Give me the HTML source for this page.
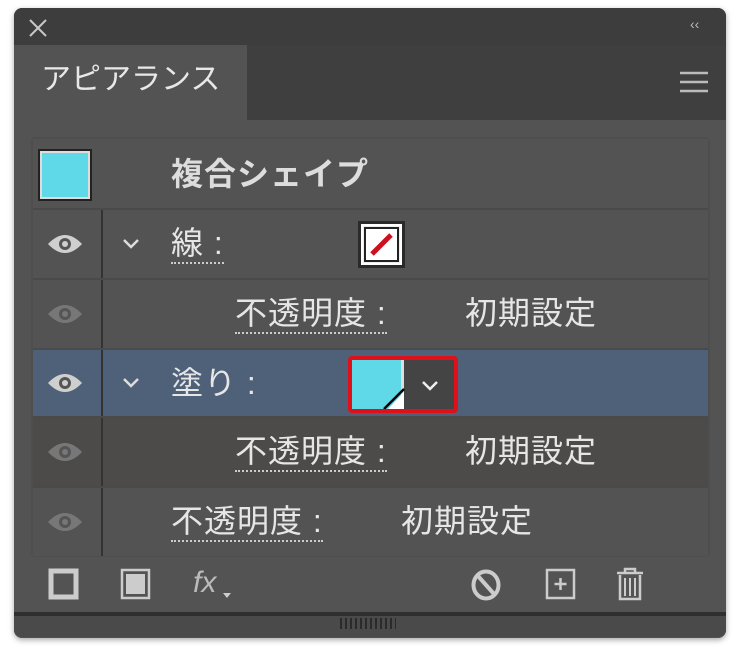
<!DOCTYPE html>
<html><head><meta charset="utf-8"><style>
*{margin:0;padding:0;box-sizing:border-box}
body{width:740px;height:660px;background:#fff;position:relative;overflow:hidden;font-family:"Liberation Sans","Noto Sans CJK JP",sans-serif;color:#e6e6e6}
.a{position:absolute}
.row{position:absolute;left:33px;width:675px;background:#535353;border-bottom:2px solid #4a4a4a}
.sep{position:absolute;left:68px;top:0;bottom:0;width:2px;background:#333}
.t{position:absolute;font-size:32px;letter-spacing:1px;line-height:1;white-space:nowrap}
.u{border-bottom:2px dotted #ccc;padding-bottom:3px}
.eye{position:absolute;left:14px}
</style></head><body>
<div class="a" style="left:14px;top:8px;width:712px;height:630px;background:#4c4c4c;border-radius:8px;overflow:hidden;box-shadow:0 2px 6px rgba(0,0,0,.35)">
 <div class="a" style="left:0;top:0;width:712px;height:37px;background:#3d3d3d"></div>
 <svg class="a" style="left:14px;top:10px" width="20" height="20"><path d="M2 2L18 18M18 2L2 18" stroke="#c8c8c8" stroke-width="2"/></svg>
 <div class="a" style="left:676px;top:8px;font-size:14px;color:#bbb">‹‹</div>
 <div class="a" style="left:0;top:37px;width:712px;height:75px;background:#3f3f3f"></div>
 <div class="a" style="left:0;top:37px;width:233px;height:83px;background:#535353"></div>
 <div class="t" style="left:27px;top:57px;font-size:30px;letter-spacing:0;color:#e8e8e8">アピアランス</div>
 <svg class="a" style="left:666px;top:63px" width="28" height="22"><path d="M0 2H28M0 11H28M0 20H28" stroke="#bbb" stroke-width="2.5"/></svg>
 <div class="a" style="left:0;top:112px;width:712px;height:518px;background:#535353"></div>
 <div class="a" style="left:17px;top:129px;width:679px;height:420px;background:#4e4e4e;border-radius:4px"></div>
</div>
<div class="row" style="top:139px;height:71px">
 <div class="a" style="left:5px;top:10px;width:54px;height:52px;background:#5fd8e8;border:2px solid #222;outline:2px solid #ddd;outline-offset:-4px"></div>
 <div class="t" style="left:138px;top:19px;font-weight:bold;font-size:32px;letter-spacing:1px;color:#ddd">複合シェイプ</div>
</div>
<div class="row" style="top:210px;height:70px"><div class="sep"></div>
 <svg class="eye" style="top:22px" width="36" height="24"><path d="M1 12Q18 -6 35 12Q18 30 1 12Z" fill="#cfcfcf"/><circle cx="18" cy="12" r="6" fill="#555"/><circle cx="18" cy="12" r="3" fill="#cfcfcf"/></svg>
 <svg class="a" style="left:88px;top:27px" width="20" height="14"><path d="M3 3L10 10L17 3" stroke="#ddd" stroke-width="2.5" fill="none"/></svg>
 <div class="t u" style="left:138px;top:17px">線 :</div>
 <div class="a" style="left:325px;top:11px;width:47px;height:47px;background:#fff;border:3px solid #2a2a2a;outline:2px solid #eee;outline-offset:-7px">
  <div class="a" style="left:3px;top:3px;width:35px;height:35px;border:2px solid #222"></div>
  <svg class="a" style="left:5px;top:5px" width="31" height="31"><path d="M6 25L25 6" stroke="#cc1020" stroke-width="5"/></svg></div>
</div>
<div class="row" style="top:280px;height:70px"><div class="sep"></div>
 <svg class="eye" style="top:22px" width="36" height="24"><path d="M1 12Q18 -6 35 12Q18 30 1 12Z" fill="#777"/><circle cx="18" cy="12" r="6" fill="#555"/><circle cx="18" cy="12" r="3" fill="#777"/></svg>
 <div class="t u" style="left:202px;top:17px">不透明度 :</div>
 <div class="t" style="left:432px;top:17px">初期設定</div>
</div>
<div class="row" style="top:350px;height:68px;background:#4f6179"><div class="sep"></div>
 <svg class="eye" style="top:21px" width="36" height="24"><path d="M1 12Q18 -6 35 12Q18 30 1 12Z" fill="#cfcfcf"/><circle cx="18" cy="12" r="6" fill="#555"/><circle cx="18" cy="12" r="3" fill="#cfcfcf"/></svg>
 <svg class="a" style="left:88px;top:26px" width="20" height="14"><path d="M3 3L10 10L17 3" stroke="#ddd" stroke-width="2.5" fill="none"/></svg>
 <div class="t" style="left:138px;top:17px">塗り :</div>
 <div class="a" style="left:315px;top:6px;width:110px;height:57px;border:4px solid #e0101a;border-radius:4px;background:#444;overflow:hidden">
  <div class="a" style="left:0;top:0;width:52px;height:49px;background:#5fd8e8;border-right:3px solid #ddd"></div>
  <svg class="a" style="left:0;top:0" width="56" height="49"><path d="M52 32L52 49L36 49Z" fill="#fff"/><path d="M32 49L52 29" stroke="#000" stroke-width="2.5"/></svg>
  <svg class="a" style="left:68px;top:19px" width="20" height="14"><path d="M3 3L10 10L17 3" stroke="#eee" stroke-width="2.5" fill="none"/></svg>
 </div>
</div>
<div class="row" style="top:418px;height:70px;background:#4d4a4a"><div class="sep"></div>
 <svg class="eye" style="top:22px" width="36" height="24"><path d="M1 12Q18 -6 35 12Q18 30 1 12Z" fill="#777"/><circle cx="18" cy="12" r="6" fill="#555"/><circle cx="18" cy="12" r="3" fill="#777"/></svg>
 <div class="t u" style="left:202px;top:17px">不透明度 :</div>
 <div class="t" style="left:432px;top:17px">初期設定</div>
</div>
<div class="row" style="top:488px;height:68px;border-bottom:none"><div class="sep"></div>
 <svg class="eye" style="top:22px" width="36" height="24"><path d="M1 12Q18 -6 35 12Q18 30 1 12Z" fill="#777"/><circle cx="18" cy="12" r="6" fill="#555"/><circle cx="18" cy="12" r="3" fill="#777"/></svg>
 <div class="t u" style="left:138px;top:17px">不透明度 :</div>
 <div class="t" style="left:368px;top:17px">初期設定</div>
</div>
<svg class="a" style="left:48px;top:568px" width="32" height="32"><rect x="3" y="3" width="25" height="26" fill="none" stroke="#ccc" stroke-width="5"/></svg>
<svg class="a" style="left:120px;top:568px" width="32" height="32"><rect x="2" y="2" width="27" height="28" fill="none" stroke="#ccc" stroke-width="2.5"/><rect x="6" y="6" width="19" height="20" fill="#ccc"/></svg>
<div class="a" style="left:193px;top:566px;font-style:italic;font-size:30px;color:#bbb">fx</div>
<svg class="a" style="left:223px;top:593px" width="8" height="6"><path d="M0 0H8L4 5Z" fill="#ccc"/></svg>
<svg class="a" style="left:470px;top:568px" width="32" height="34"><ellipse cx="16" cy="17" rx="12.5" ry="13.5" fill="none" stroke="#ccc" stroke-width="4"/><path d="M8 8L24 26" stroke="#ccc" stroke-width="4"/></svg>
<svg class="a" style="left:545px;top:568px" width="32" height="32"><rect x="2" y="2" width="27" height="28" fill="none" stroke="#ccc" stroke-width="2.5"/><path d="M15.5 10V22M9.5 16H21.5" stroke="#ccc" stroke-width="2.5"/></svg>
<svg class="a" style="left:614px;top:566px" width="32" height="36"><path d="M3 7H29M11 7V3H21V7" stroke="#ccc" stroke-width="2.5" fill="none"/><path d="M6 9V33H26V9" stroke="#ccc" stroke-width="2.5" fill="none"/><path d="M11 12V30M16 12V30M21 12V30" stroke="#ccc" stroke-width="2"/></svg>
<div class="a" style="left:14px;top:612px;width:712px;height:4px;background:#2f2f2f"></div>
<div class="a" style="left:14px;top:616px;width:712px;height:21px;background:#4a4a4a;border-radius:0 0 8px 8px"></div>
<div class="a" style="left:340px;top:618px;width:56px;height:11px;background:repeating-linear-gradient(90deg,#2a2a2a 0 2px,transparent 2px 5px)"></div>
</body></html>
